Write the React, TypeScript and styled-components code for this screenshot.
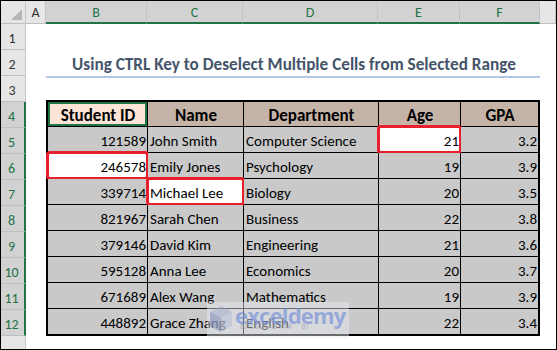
import styled, { createGlobalStyle } from 'styled-components'

const GlobalStyle = createGlobalStyle`
  body {
    margin: 0;
    background: #fff;
  }
`

const GREEN = '#217346'
const FONT = `Carlito, Lato, 'Liberation Sans', sans-serif`

const Frame = styled.div`
  position: relative;
  width: 557px;
  height: 350px;
  box-sizing: border-box;
  border: 1px solid #000;
  overflow: hidden;
  display: flex;
  flex-direction: column;
  font-family: ${FONT};
  background: #fff;
`

const ColumnBar = styled.div`
  display: flex;
  height: 23px;
  flex: none;
`

const Corner = styled.div`
  width: 25px;
  flex: none;
  box-sizing: border-box;
  background: #e6e6e6;
  border-right: 1px solid #c4c4c4;
  border-bottom: 1px solid #bfbfbf;
  display: flex;
  align-items: flex-end;
  justify-content: flex-end;
  padding: 0 3px 3px 0;
`

const ColHead = styled.div<{ $w?: number; $sel?: boolean }>`
  width: ${(p) => (p.$w ? `${p.$w}px` : 'auto')};
  flex: ${(p) => (p.$w ? 'none' : '1')};
  box-sizing: border-box;
  display: flex;
  align-items: center;
  justify-content: center;
  font-size: 14px;
  padding-top: ${(p) => (p.$sel ? '2px' : '0')};
  background: ${(p) => (p.$sel ? '#d2d2d2' : '#e6e6e6')};
  color: ${(p) => (p.$sel ? GREEN : '#333')};
  border-right: 1px solid #c4c4c4;
  border-bottom: ${(p) => (p.$sel ? `2px solid ${GREEN}` : '1px solid #bfbfbf')};
`

const Body = styled.div`
  display: flex;
  flex: 1;
  min-height: 0;
`

const RowHeads = styled.div`
  width: 25px;
  flex: none;
  display: flex;
  flex-direction: column;
`

const RowHead = styled.div<{ $sel?: boolean }>`
  height: 26px;
  flex: none;
  box-sizing: border-box;
  display: flex;
  align-items: center;
  justify-content: center;
  padding: 4px 2px 0 0;
  font-size: 14px;
  background: ${(p) => (p.$sel ? '#d2d2d2' : '#e6e6e6')};
  color: ${(p) => (p.$sel ? GREEN : '#333')};
  border-bottom: 1px solid #bfbfbf;
  border-right: ${(p) => (p.$sel ? `2px solid ${GREEN}` : '1px solid #c4c4c4')};
`

const RowFiller = styled.div`
  flex: 1;
  background: #e6e6e6;
  border-right: 1px solid #c4c4c4;
`

const Sheet = styled.div`
  flex: 1;
  display: flex;
  flex-direction: column;
  padding-left: 20px;
`

const BlankRow = styled.div<{ $h: number }>`
  height: ${(p) => p.$h}px;
  flex: none;
`

const TitleRow = styled.div`
  width: 494px;
  height: 28px;
  flex: none;
  display: flex;
  align-items: center;
  justify-content: center;
  padding: 3px 0 0 2px;
  box-sizing: border-box;
  border-bottom: 2px solid #b4c6e7;
  font-size: 17.2px;
  font-weight: 700;
  color: #44546a;
  white-space: nowrap;
`

const Table = styled.div`
  display: grid;
  grid-template-columns: 99px 95px 134px 81px 77px;
  grid-template-rows: 24px;
  grid-auto-rows: 25px;
  gap: 1px;
  width: 494px;
  box-sizing: border-box;
  border: 2px solid #000;
  background: #000;
`

type CellState = 'selected' | 'active' | 'deselected'

const Cell = styled.div<{ $head?: boolean; $align: string; $state: CellState }>`
  position: relative;
  display: flex;
  align-items: center;
  justify-content: ${(p) => p.$align};
  padding: ${(p) => (p.$head ? '2px 2px 0 3px' : '2px 1px 0 2px')};
  box-sizing: border-box;
  font-size: ${(p) => (p.$head ? '17px' : '15px')};
  font-weight: ${(p) => (p.$head ? 700 : 400)};
  color: #000;
  white-space: nowrap;
  background: ${(p) =>
    p.$state === 'active'
      ? '#fce4d6'
      : p.$state === 'deselected'
        ? '#fff'
        : p.$head
          ? '#c5b3a7'
          : '#c9c9c9'};
  box-shadow: ${(p) => (p.$state === 'active' ? `inset 0 0 0 2px ${GREEN}` : 'none')};

  ${(p) =>
    p.$state === 'deselected' &&
    `
    &::after {
      content: '';
      position: absolute;
      inset: -2px;
      border: 3px solid #e8202d;
      border-radius: 4px;
    }
  `}
`

const Watermark = styled.div`
  position: absolute;
  left: 206px;
  top: 301px;
  width: 142px;
  height: 36px;
  display: flex;
  align-items: flex-start;
  gap: 1px;
  padding: 2px 0 0 1px;
  box-sizing: border-box;
  background: rgba(235, 238, 245, 0.45);
  pointer-events: none;
`

const MarkText = styled.div`
  display: flex;
  flex-direction: column;
  line-height: 1;
  min-width: 0;
`

const MarkName = styled.span`
  font-family: 'Open Sans', sans-serif;
  font-size: 22px;
  font-weight: 700;
  letter-spacing: -0.8px;
  color: rgba(105, 135, 215, 0.6);
  margin-top: 0;
`

const MarkTag = styled.span`
  font-family: 'Open Sans', sans-serif;
  font-size: 6.5px;
  font-weight: 600;
  letter-spacing: 1px;
  color: rgba(120, 130, 160, 0.45);
  margin: -2px 0 0 5px;
`

const columns = [
  { label: 'A', w: 20, sel: false },
  { label: 'B', w: 101, sel: true },
  { label: 'C', w: 96, sel: true },
  { label: 'D', w: 135, sel: true },
  { label: 'E', w: 82, sel: true },
  { label: 'F', w: 80, sel: true },
]

const headers = ['Student ID', 'Name', 'Department', 'Age', 'GPA']

const rows: [string, string, string, string, string][] = [
  ['121589', 'John Smith', 'Computer Science', '21', '3.2'],
  ['246578', 'Emily Jones', 'Psychology', '19', '3.9'],
  ['339714', 'Michael Lee', 'Biology', '20', '3.5'],
  ['821967', 'Sarah Chen', 'Business', '22', '3.8'],
  ['379146', 'David Kim', 'Engineering', '21', '3.6'],
  ['595128', 'Anna Lee', 'Economics', '20', '3.7'],
  ['671689', 'Alex Wang', 'Mathematics', '19', '3.9'],
  ['448892', 'Grace Zhang', 'English', '22', '3.4'],
]

// cells knocked out of the selection with Ctrl+click
const deselected = new Set(['1-0', '2-1', '0-3'])
const alignFor = ['flex-end', 'flex-start', 'flex-start', 'flex-end', 'flex-end']

const CubeLogo = () => (
  <svg width="26" height="30" viewBox="0 0 26 30" style={{ flex: 'none' }}>
    <polygon points="13,2 24,8 13,14 2,8" fill="rgba(150,165,200,0.45)" />
    <polygon points="2,8 13,14 13,28 2,22" fill="rgba(110,130,180,0.5)" />
    <polygon points="24,8 13,14 13,28 24,22" fill="rgba(170,180,210,0.4)" />
  </svg>
)

const App = () => {
  return (
    <>
      <GlobalStyle />
      <Frame>
        <ColumnBar>
          <Corner>
            <svg width="11" height="11" viewBox="0 0 11 11">
              <polygon points="11,0 11,11 0,11" fill="#b6b6b6" />
            </svg>
          </Corner>
          {columns.map((c) => (
            <ColHead key={c.label} $w={c.w} $sel={c.sel}>
              {c.label}
            </ColHead>
          ))}
          <ColHead />
        </ColumnBar>
        <Body>
          <RowHeads>
            {Array.from({ length: 12 }, (_, i) => (
              <RowHead key={i} $sel={i >= 3}>
                {i + 1}
              </RowHead>
            ))}
            <RowFiller />
          </RowHeads>
          <Sheet>
            <BlankRow $h={26} />
            <TitleRow>Using CTRL Key to Deselect Multiple Cells from Selected Range</TitleRow>
            <BlankRow $h={22} />
            <Table>
              {headers.map((h, i) => (
                <Cell key={h} $head $align="center" $state={i === 0 ? 'active' : 'selected'}>
                  {h}
                </Cell>
              ))}
              {rows.map((r, ri) =>
                r.map((v, ci) => (
                  <Cell
                    key={`${ri}-${ci}`}
                    $align={alignFor[ci]}
                    $state={deselected.has(`${ri}-${ci}`) ? 'deselected' : 'selected'}
                  >
                    {v}
                  </Cell>
                )),
              )}
            </Table>
          </Sheet>
        </Body>
        <Watermark>
          <CubeLogo />
          <MarkText>
            <MarkName>exceldemy</MarkName>
            <MarkTag>EXCEL · DATA · BI</MarkTag>
          </MarkText>
        </Watermark>
      </Frame>
    </>
  )
}

export default App
